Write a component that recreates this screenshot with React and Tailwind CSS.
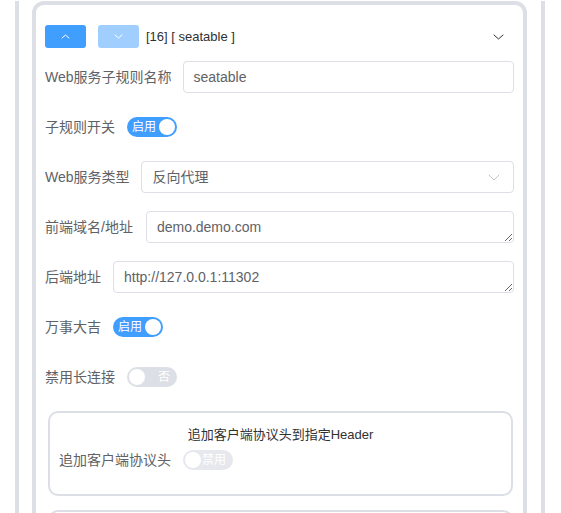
import React from "react";

const font = { fontFamily: '"Liberation Sans", "Noto Sans CJK SC", sans-serif' };

function Chevron({ dir = "down", className = "", color = "currentColor", w = 10, h = 6, sw = 1.2 }) {
  const pts = dir === "down" ? `1,1 ${w / 2},${h - 1} ${w - 1},1` : `1,${h - 1} ${w / 2},1 ${w - 1},${h - 1}`;
  return (
    <svg width={w} height={h} viewBox={`0 0 ${w} ${h}`} className={className}>
      <polyline points={pts} fill="none" stroke={color} strokeWidth={sw} strokeLinecap="round" strokeLinejoin="round" />
    </svg>
  );
}

function Switch({ on, text, faded }) {
  return (
    <div
      className={`relative w-[50px] h-[20px] rounded-full shrink-0 ${on ? "bg-[#409eff]" : faded ? "bg-[#e6e8ee]" : "bg-[#dcdfe6]"}`}
    >
      <span
        className={`absolute top-0 h-[20px] leading-[20px] text-[12px] text-white ${on ? "left-[5px]" : "right-[7px]"}`}
      >
        {text}
      </span>
      <span
        className={`absolute top-[2px] w-[16px] h-[16px] rounded-full bg-white ${on ? "right-[2px]" : "left-[2px]"}`}
      />
    </div>
  );
}

function Label({ children, tight, wide }) {
  return (
    <div
      className={`${tight ? "pr-[11px]" : wide ? "pr-[13px]" : "pr-[12px]"} text-[14px] text-[#606266] whitespace-nowrap leading-[32px]`}
    >
      {children}
    </div>
  );
}

function Row({ label, children, tight, wide }) {
  return (
    <div className="flex items-center h-[32px] mb-[18px]">
      <Label tight={tight} wide={wide}>{label}</Label>
      {children}
    </div>
  );
}

export default function App() {
  return (
    <div className="w-[561px] h-[513px] overflow-hidden bg-white" style={font}>
      <div className="ml-[15px] w-[530px] h-[513px] border-x-4 border-[#dcdfe6] pl-[13px] pr-[14px]">
        <div className="mt-[1px] border-4 border-[#dcdfe6] rounded-[12px] pt-[20px] px-[9px] h-[600px]">
          {/* header */}
          <div className="flex items-center h-[23px] mb-[13px]">
            <div className="w-[41px] h-[23px] rounded-[3px] bg-[#409eff] flex items-center justify-center">
              <Chevron dir="up" color="#ffffff" w={9} h={5} sw={1} />
            </div>
            <div className="ml-[12px] w-[41px] h-[23px] rounded-[3px] bg-[#a0cfff] flex items-center justify-center">
              <Chevron dir="down" color="#ffffff" w={9} h={5} sw={1} />
            </div>
            <div className="ml-[7px] text-[13px] text-[#303133]">[16] [ seatable ]</div>
            <div className="ml-auto mr-[10px] flex items-center">
              <Chevron dir="down" color="#303133" w={11} h={6} sw={1} />
            </div>
          </div>

          <Row label="Web服务子规则名称" tight>
            <div className="flex-1 h-[32px] border border-[#dcdfe6] rounded-[4px] px-[10px] text-[14px] text-[#606266] leading-[30px]">
              seatable
            </div>
          </Row>

          <Row label="子规则开关">
            <Switch on text="启用" />
          </Row>

          <Row label="Web服务类型" tight>
            <div className="flex-1 h-[32px] border border-[#dcdfe6] rounded-[4px] pl-[11px] pr-[13px] text-[14px] text-[#606266] leading-[30px] flex items-center justify-between">
              <span>反向代理</span>
              <Chevron dir="down" color="#c0c4cc" w={12} h={7} sw={1} />
            </div>
          </Row>

          <Row label="前端域名/地址" wide>
            <textarea
              readOnly
              value="demo.demo.com"
              className="flex-1 h-[32px] border border-[#dcdfe6] rounded-[4px] px-[10px] py-[5px] text-[14px] text-[#606266] leading-[20px] outline-none overflow-hidden"
              style={font}
            />
          </Row>

          <Row label="后端地址">
            <textarea
              readOnly
              value="http://127.0.0.1:11302"
              className="flex-1 h-[32px] border border-[#dcdfe6] rounded-[4px] px-[10px] py-[5px] text-[14px] text-[#606266] leading-[20px] outline-none overflow-hidden"
              style={font}
            />
          </Row>

          <Row label="万事大吉">
            <Switch on text="启用" />
          </Row>

          <Row label="禁用长连接">
            <Switch on={false} text="否" />
          </Row>

          <div className="ml-[3px] mr-[1px] border-2 border-[#dcdfe6] rounded-[10px] pt-[12px] pb-[18px] pl-[9px]">
            <div className="text-center text-[13px] leading-[19px] text-[#303133] pr-[9px]">追加客户端协议头到指定Header</div>
            <div className="flex items-center h-[32px]">
              <Label>追加客户端协议头</Label>
              <Switch on={false} text="禁用" faded />
            </div>
          </div>

          <div className="ml-[3px] mr-[1px] mt-[14px] border-2 border-[#dcdfe6] rounded-[10px] h-[80px]" />
        </div>
      </div>
    </div>
  );
}
